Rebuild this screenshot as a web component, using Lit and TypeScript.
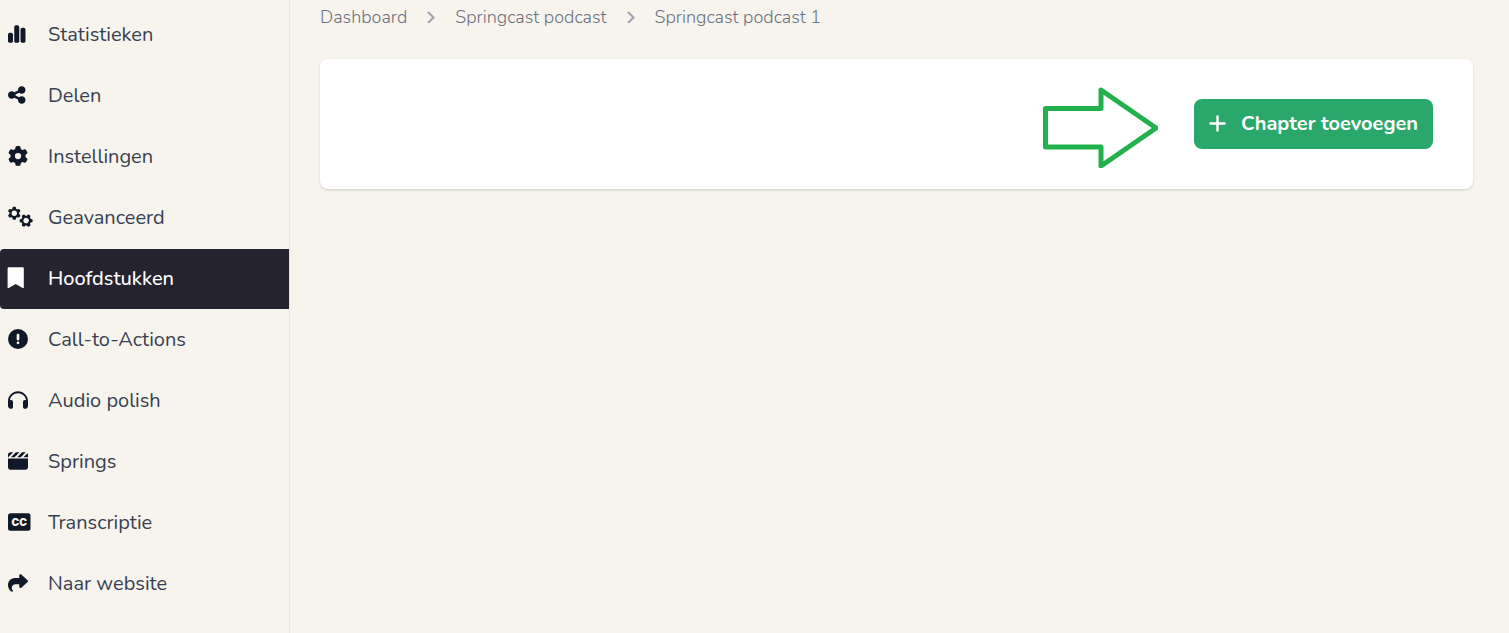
import { LitElement, html, css, svg } from "lit";
import { customElement } from "lit/decorators.js";
import { classMap } from "lit/directives/class-map.js";

const gearBody =
  "M495.9 166.6c3.2 8.7 .5 18.4-6.4 24.6l-43.3 39.4c1.1 8.3 1.7 16.8 1.7 25.4s-.6 17.1-1.7 25.4l43.3 39.4c6.9 6.2 9.6 15.9 6.4 24.6c-4.4 11.9-9.7 23.3-15.8 34.3l-4.7 8.1c-6.6 11-14 21.4-22.1 31.2c-5.9 7.2-15.7 9.6-24.5 6.8l-55.7-17.7c-13.4 10.3-28.2 18.9-44 25.4l-12.5 57.1c-2 9.1-9 16.3-18.2 17.8c-13.8 2.3-28 3.5-42.5 3.5s-28.7-1.2-42.5-3.5c-9.2-1.5-16.2-8.7-18.2-17.8l-12.5-57.1c-15.8-6.5-30.6-15.1-44-25.4L83.1 425.9c-8.8 2.8-18.6 .3-24.5-6.8c-8.1-9.8-15.5-20.2-22.1-31.2l-4.7-8.1c-6.1-11-11.4-22.4-15.8-34.3c-3.2-8.7-.5-18.4 6.4-24.6l43.3-39.4C64.6 273.1 64 264.6 64 256s.6-17.1 1.7-25.4L22.4 191.2c-6.9-6.2-9.6-15.9-6.4-24.6c4.4-11.9 9.7-23.3 15.8-34.3l4.7-8.1c6.6-11 14-21.4 22.1-31.2c5.9-7.2 15.7-9.6 24.5-6.8l55.7 17.7c13.4-10.3 28.2-18.9 44-25.4l12.5-57.1c2-9.1 9-16.3 18.2-17.8C227.3 1.2 241.5 0 256 0s28.7 1.2 42.5 3.5c9.2 1.5 16.2 8.7 18.2 17.8l12.5 57.1c15.8 6.5 30.6 15.1 44 25.4l55.7-17.7c8.8-2.8 18.6-.3 24.5 6.8c8.1 9.8 15.5 20.2 22.1 31.2l4.7 8.1c6.1 11 11.4 22.4 15.8 34.3z";
const gear = gearBody + "M256 336a80 80 0 1 0 0-160 80 80 0 1 0 0 160z";
const openGear = gearBody + "M256 362a106 106 0 1 0 0-212 106 106 0 1 0 0 212z";

/* Every icon is drawn on a 512-unit tall grid; 512 units equal 20px. */
const icons: Record<string, { width: number; art: unknown }> = {
  chart: {
    width: 448,
    art: svg`<path d="M160 80c0-26.500 21.500-48 48-48h32c26.500 0 48 21.500 48 48V432c0 26.500-21.500 48-48 48H208c-26.500 0-48-21.500-48-48V80zM0 272c0-26.500 21.500-48 48-48H80c26.500 0 48 21.500 48 48V432c0 26.500-21.500 48-48 48H48c-26.500 0-48-21.500-48-48V272zM368 96h32c26.500 0 48 21.500 48 48V432c0 26.500-21.500 48-48 48H368c-26.500 0-48-21.500-48-48V144c0-26.500 21.500-48 48-48z"/>`,
  },
  share: {
    width: 448,
    art: svg`<path d="M352 224c53 0 96-43 96-96s-43-96-96-96s-96 43-96 96c0 4 .2 8 .7 11.900l-94.100 47C145.400 170.200 121.900 160 96 160c-53 0-96 43-96 96s43 96 96 96c25.900 0 49.400-10.200 66.600-26.900l94.100 47c-.5 3.900-.7 7.800-.7 11.900c0 53 43 96 96 96s96-43 96-96s-43-96-96-96c-25.900 0-49.400 10.200-66.600 26.900l-94.100-47c.5-3.900 .7-7.800 .7-11.900s-.2-8-.7-11.900l94.100-47C302.600 213.800 326.100 224 352 224z"/>`,
  },
  gear: { width: 512, art: svg`<path d=${gear}/>` },
  gears: {
    width: 640,
    art: svg`<path transform="translate(-6 -6) scale(.65)" d=${openGear}/><path transform="translate(464 350) rotate(30) scale(.65) translate(-256 -256)" d=${openGear}/>`,
  },
  bookmark: {
    width: 448,
    art: svg`<path d="M-10 10c0-18 12-30 30-30H374c18 0 30 12 30 30V500c0 16-14 22-28 14L197 412 18 514c-14 8-28 2-28-14z"/>`,
  },
  alert: {
    width: 512,
    art: svg`<path d="M256 512a256 256 0 1 0 0-512 256 256 0 1 0 0 512zm0-392c20 0 34 13 34 30v112c0 17-14 30-34 30s-34-13-34-30V150c0-17 14-30 34-30zm36 234a36 36 0 1 1-72 0 36 36 0 1 1 72 0z"/>`,
  },
  headphones: {
    width: 512,
    art: svg`<path d="M256 80C149.900 80 62.400 159.400 49.600 262c9.400-3.800 19.600-6 30.400-6c26.500 0 48 21.500 48 48V432c0 26.500-21.500 48-48 48c-44.200 0-80-35.800-80-80V288C0 146.600 114.600 32 256 32s256 114.600 256 256V400c0 44.200-35.800 80-80 80c-26.500 0-48-21.500-48-48V304c0-26.500 21.500-48 48-48c10.800 0 21 2.100 30.400 6C449.600 159.400 362.100 80 256 80z"/>`,
  },
  clapper: {
    width: 512,
    art: svg`<path d="M448 32H361.900l-1 1-127 127h92.100l1-1L453.800 32.300c-1.900-.2-3.800-.3-5.800-.3zm64 128V96c0-15.100-5.300-29.100-14-40l-104 104H512zM294.100 32H201.900l-1 1L73.900 160h92.100l1-1 127-127zM64 32C28.700 32 0 60.700 0 96v64H6.100l1-1 127-127H64zM512 192H0V416c0 35.300 28.700 64 64 64H448c35.300 0 64-28.700 64-64V192z"/>`,
  },
  captions: {
    width: 576,
    art: svg`<rect y="32" width="576" height="448" rx="64"/><text class="cc" x="288" y="350" text-anchor="middle">CC</text>`,
  },
  forward: {
    width: 512,
    art: svg`<path d="M307 34.800c-11.500 5.100-19 16.600-19 29.200v64H176C78.800 128 0 206.800 0 304C0 417.300 81.500 467.900 100.200 478.100c2.500 1.400 5.300 1.900 8.100 1.900c10.900 0 19.700-8.900 19.700-19.700c0-7.500-4.300-14.400-9.800-19.500C108.800 431.900 96 414.400 96 384c0-53 43-96 96-96h96v64c0 12.600 7.400 24.100 19 29.200s25 3 34.400-5.400l160-144c6.700-6.100 10.600-14.700 10.600-23.800s-3.800-17.700-10.600-23.800l-160-144c-9.400-8.500-22.900-10.600-34.400-5.400z"/>`,
  },
};

const menu = [
  { icon: "chart", label: "Statistieken" },
  { icon: "share", label: "Delen" },
  { icon: "gear", label: "Instellingen" },
  { icon: "gears", label: "Geavanceerd" },
  { icon: "bookmark", label: "Hoofdstukken", active: true },
  { icon: "alert", label: "Call-to-Actions" },
  { icon: "headphones", label: "Audio polish" },
  { icon: "clapper", label: "Springs" },
  { icon: "captions", label: "Transcriptie" },
  { icon: "forward", label: "Naar website" },
];

const crumbs = ["Dashboard", "Springcast podcast", "Springcast podcast 1"];

@customElement("app-root")
export class AppRoot extends LitElement {
  static styles = css`
    :host {
      display: flex;
      min-height: 100vh;
      background: #f7f4ed;
      color: #111827;
      font-family: Nunito, "Open Sans", sans-serif;
      font-size: 20px;
      line-height: 28px;
    }
    * {
      box-sizing: border-box;
    }
    a {
      color: inherit;
      text-decoration: none;
    }
    .sidebar {
      flex: none;
      width: 290px;
      padding-top: 5px;
      border-right: 1px solid #e5e7eb;
    }
    .menu {
      display: flex;
      flex-direction: column;
      gap: 1px;
      margin: 0;
      padding: 0;
      list-style: none;
    }
    .item {
      display: flex;
      align-items: center;
      height: 60px;
      padding-left: 8px;
    }
    .item.active {
      background: #25232f;
      color: #fff;
      font-weight: 500;
      border-radius: 4px 0 0 4px;
    }
    .label {
      color: #374151;
    }
    .active .label {
      color: #fff;
    }
    .slot {
      display: flex;
      flex: none;
      width: 40px;
      padding-bottom: 2px;
    }
    .icon {
      display: block;
      height: 20px;
      fill: currentColor;
      overflow: visible;
    }
    .cc {
      fill: #f7f4ed;
      font-family: Inter, sans-serif;
      font-size: 264px;
      font-weight: 900;
    }
    .main {
      flex: 1;
      min-width: 0;
      padding: 3px 36px 0 30px;
    }
    .crumbs {
      display: flex;
      align-items: center;
      gap: 19px;
      margin: 0 0 28px;
      padding: 0;
      list-style: none;
      color: #6b7280;
      font-size: 18px;
      font-weight: 300;
    }
    .crumb {
      display: flex;
      align-items: center;
      gap: 19px;
    }
    .chevron {
      display: block;
      width: 10px;
      height: 12px;
      fill: none;
      stroke: #9ca3af;
      stroke-width: 2;
      stroke-linecap: round;
      stroke-linejoin: round;
    }
    .card {
      display: flex;
      align-items: center;
      justify-content: flex-end;
      gap: 36px;
      min-height: 130px;
      padding: 0 40px;
      border-radius: 8px;
      background: #fff;
      box-shadow: 0 1px 3px rgba(0, 0, 0, 0.1), 0 1px 2px rgba(0, 0, 0, 0.06);
    }
    .pointer {
      display: block;
      width: 115px;
      height: 88px;
      fill: none;
      stroke: #22b14c;
      stroke-width: 5;
      stroke-linejoin: round;
    }
    .add {
      display: flex;
      align-items: center;
      gap: 15px;
      height: 50px;
      padding: 0 15px;
      border: 0;
      border-radius: 8px;
      background: #2aa76a;
      color: #fff;
      font: inherit;
      font-weight: 700;
    }
    .plus {
      display: block;
      width: 17px;
      height: 17px;
      fill: none;
      stroke: currentColor;
      stroke-width: 2.5;
      stroke-linecap: round;
      overflow: visible;
    }
  `;

  render() {
    return html`
      <nav class="sidebar" aria-label="Podcast">
        <ul class="menu">
          ${menu.map(
            ({ icon, label, active }) => html`<li>
              <a class=${classMap({ item: true, active: !!active })} href="#">
                <span class="slot"
                  ><svg class="icon" viewBox="0 0 ${icons[icon].width} 512" aria-hidden="true">
                    ${icons[icon].art}
                  </svg></span
                >
                <span class="label">${label}</span>
              </a>
            </li>`
          )}
        </ul>
      </nav>
      <main class="main">
        <ol class="crumbs">
          ${crumbs.map(
            (name, i) => html`<li class="crumb">
              ${i
                ? html`<svg class="chevron" viewBox="0 0 10 12" aria-hidden="true">
                    <path d="M2.500 1.500L7.500 6.500 2.500 11.500" />
                  </svg>`
                : ""}<a href="#">${name}</a>
            </li>`
          )}
        </ol>
        <section class="card">
          <svg class="pointer" viewBox="0 0 115 88" aria-hidden="true">
            <path d="M2.500 28.500H58V10L113 48 58 86V67H2.500z" />
          </svg>
          <button class="add" type="button">
            <svg class="plus" viewBox="0 0 17 17" aria-hidden="true">
              <path d="M8.500 .5v14M1.500 7.500h14" />
            </svg>
            Chapter toevoegen
          </button>
        </section>
      </main>
    `;
  }
}
